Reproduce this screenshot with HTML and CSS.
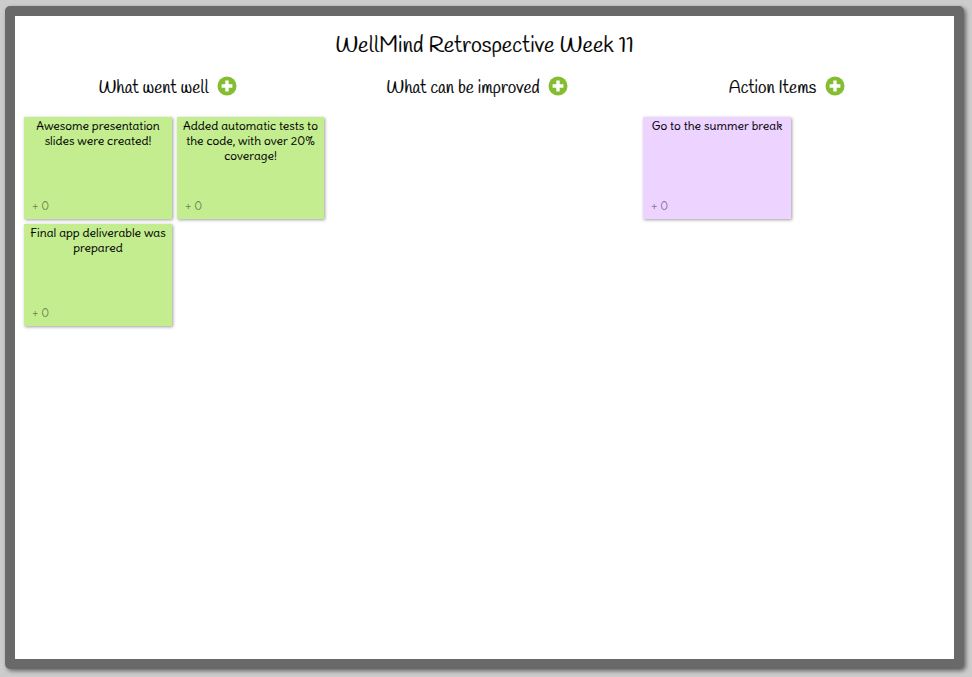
FILE: index.html
```html
<!DOCTYPE html>
<html lang="en">
<head>
<meta charset="utf-8">
<title>WellMind Retrospective Week 11</title>
<link rel="stylesheet" href="styles.css">
</head>
<body>
<main class="board">
  <h1 class="title">WellMind Retrospective Week 11</h1>
  <div class="columns">
    <section class="column">
      <header class="head"><h2 class="name">What went well</h2>
        <svg class="add" viewBox="0 0 20 20"><circle cx="10" cy="10" r="9.5"/><path d="M10 4.6v10.8M4.6 10h10.8"/></svg></header>
      <div class="cards">
        <article class="card green"><p class="text">Awesome presentation<br>slides were created!</p><span class="votes">+ <b>0</b></span></article>
        <article class="card green"><p class="text">Added automatic tests to<br>the code, with over 20%<br>coverage!</p><span class="votes">+ <b>0</b></span></article>
        <article class="card green"><p class="text">Final app deliverable was<br>prepared</p><span class="votes">+ <b>0</b></span></article>
      </div>
    </section>
    <section class="column">
      <header class="head"><h2 class="name">What can be improved</h2>
        <svg class="add" viewBox="0 0 20 20"><circle cx="10" cy="10" r="9.5"/><path d="M10 4.6v10.8M4.6 10h10.8"/></svg></header>
    </section>
    <section class="column">
      <header class="head"><h2 class="name">Action Items</h2>
        <svg class="add" viewBox="0 0 20 20"><circle cx="10" cy="10" r="9.5"/><path d="M10 4.6v10.8M4.6 10h10.8"/></svg></header>
      <div class="cards">
        <article class="card purple"><p class="text">Go to the summer break</p><span class="votes">+ <b>0</b></span></article>
      </div>
    </section>
  </div>
</main>
</body>
</html>
```

FILE: styles.css
```css
* { box-sizing: border-box; }
body {
  margin: 0;
  height: 677px;
  padding: 6px 8px 7px 5px;
  background: #ccc;
  color: #000;
  font-family: "Delius", "Lato", sans-serif;
  overflow: hidden;
}
.board {
  height: 663px;
  width: 959px;
  background: #fff;
  border: 10px solid #696969;
  border-radius: 5px;
  box-shadow: 2px 2px 4px rgba(0, 0, 0, .5);
}
.title, .name {
  margin: 0;
  font-family: "Handlee", "Lato", sans-serif;
  font-weight: 400;
  white-space: nowrap;
  -webkit-text-stroke: .2px #000;
}
.title {
  height: 58px;
  line-height: 60px;
  font-size: 22.15px;
  text-align: center;
}
.columns {
  display: grid;
  grid-template-columns: repeat(3, 305px);
  column-gap: 4.5px;
  padding-left: 9px;
}
.column { min-width: 0; }
.head {
  display: flex;
  justify-content: center;
  align-items: center;
  gap: 8.4px;
  height: 24px;
  padding-right: 17.6px;
  margin-bottom: 19px;
}
.name { font-size: 17.25px; line-height: 24px; padding-top: 5.5px; }
.add { width: 20px; height: 20px; flex: none; }
.add circle { fill: #84bd2f; }
.add path { stroke: #fff; stroke-width: 3.4; fill: none; }
.cards {
  display: grid;
  grid-template-columns: 148px 147px;
  gap: 5px;
}
.card {
  display: flex;
  flex-direction: column;
  justify-content: space-between;
  height: 102px;
  padding: 1px 0 5px;
  box-shadow: 1px 1px 3px rgba(0, 0, 0, .38);
}
.green { background: #c4ed90; }
.purple { background: #edd3ff; }
.text {
  margin: 0;
  font-size: 12px;
  line-height: 15px;
  text-align: center;
  white-space: nowrap;
  -webkit-text-stroke: .1px #000;
}
.votes {
  padding-left: 8px;
  font-size: 12px;
  line-height: 16px;
  color: rgba(0, 0, 0, .45);
  -webkit-text-stroke: .1px rgba(0, 0, 0, .45);
}
.votes b { font-weight: 400; }
```
